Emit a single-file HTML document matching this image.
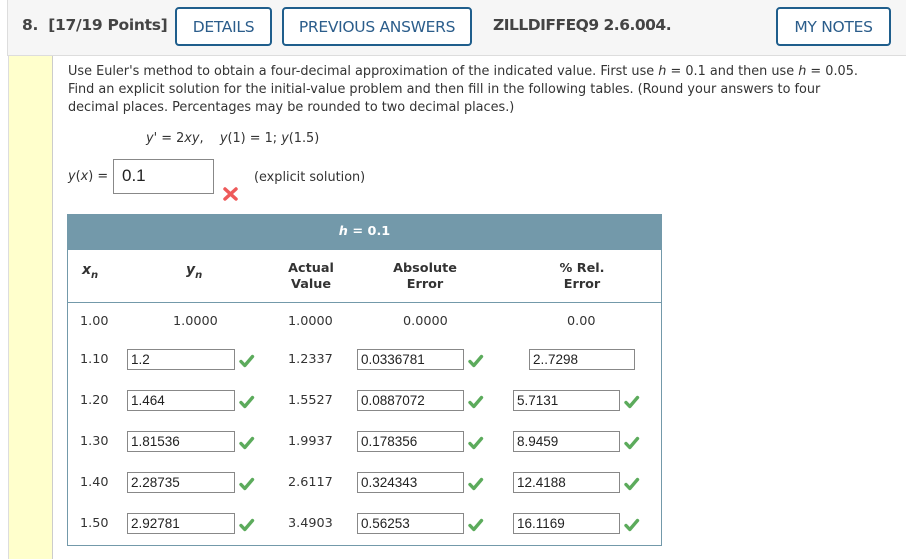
<!DOCTYPE html>
<html><head><style>
*{margin:0;padding:0;box-sizing:border-box}
body{width:906px;height:559px;background:#fff;position:relative;overflow:hidden;font-family:"DejaVu Sans",Verdana,sans-serif;color:#333}
.a{position:absolute;white-space:nowrap}
.hdr{position:absolute;left:7px;top:0;width:899px;height:56px;background:#f6f6f6;border-bottom:1px solid #ddd;border-left:1px solid #ddd}
.btn{position:absolute;top:7px;height:39px;border:2px solid #1f5e8c;border-radius:4px;background:#fff;color:#2b5d8b;font-family:"DejaVu Sans",sans-serif;font-size:15.5px;display:flex;align-items:center;justify-content:center;letter-spacing:-0.3px}
.yl{position:absolute;left:8px;top:56px;width:45px;height:503px;background:#ffffcc;border-right:1px solid #ccc;border-left:1px solid #ddd}
.p{font-size:12.85px;line-height:18px;color:#333}
.in{position:absolute;height:21px;border:1px solid #888;background:#fff;font-family:"Liberation Sans",Arial,sans-serif;font-size:13.5px;padding-left:3px;line-height:19px;color:#222}
.ck{position:absolute;width:17px;height:15px}
.t{font-size:12.8px;color:#333}
.th{font-size:12.8px;font-weight:bold;color:#333;text-align:center;line-height:16px}
</style></head><body>
<div class="hdr"></div>
<div class="a" style="left:22px;top:16px;font-size:15.5px;font-weight:bold;color:#444;letter-spacing:-0.3px">8.&nbsp; [17/19 Points]</div>
<div class="btn" style="left:175px;width:97px">DETAILS</div>
<div class="btn" style="left:282px;width:190px">PREVIOUS ANSWERS</div>
<div class="a" style="left:493px;top:16px;font-size:15.5px;font-weight:bold;color:#444;letter-spacing:-0.5px">ZILLDIFFEQ9 2.6.004.</div>
<div class="btn" style="left:776px;width:115px">MY NOTES</div>
<div class="yl"></div>
<div class="a p" style="left:68px;top:63px">Use Euler's method to obtain a four-decimal approximation of the indicated value. First use <i>h</i> = 0.1 and then use <i>h</i> = 0.05.<br>Find an explicit solution for the initial-value problem and then fill in the following tables. (Round your answers to four<br>decimal places. Percentages may be rounded to two decimal places.)</div>
<div class="a p" style="left:146px;top:130px"><i>y</i>' = 2<i>xy</i>,&nbsp;&nbsp;&nbsp; <i>y</i>(1) = 1; <i>y</i>(1.5)</div>
<div class="a p" style="left:68px;top:168px"><i>y</i>(<i>x</i>) =</div>
<div class="in" style="left:113px;top:159px;width:101px;height:35px;font-size:17px;line-height:31px;padding-left:8px">0.1</div>
<svg class="a" style="left:223px;top:187px" width="15" height="14" viewBox="0 0 15 14"><path d="M2 2L13 12M13 2L2 12" stroke="#ee5a5a" stroke-width="3.5" stroke-linecap="round"/></svg>
<div class="a p" style="left:254px;top:169px">(explicit solution)</div>
<div class="a" style="left:67px;top:214px;width:595px;height:332px;border:1px solid #7399aa;border-top:none"></div>
<div class="a" style="left:67px;top:214px;width:595px;height:36px;background:#7399aa;color:#fff;font-weight:bold;font-size:12.8px;text-align:center;line-height:36px"><i>h</i> = 0.1</div>
<div class="a" style="left:67px;top:302px;width:595px;height:1px;background:#7399aa"></div>
<div class="a th" style="left:82px;top:262px;font-size:14px"><i>x<sub style="font-size:10px">n</sub></i></div>
<div class="a th" style="left:186px;top:262px;font-size:14px"><i>y<sub style="font-size:10px">n</sub></i></div>
<div class="a th" style="left:280px;top:261px;width:62px">Actual<br>Value</div>
<div class="a th" style="left:385px;top:261px;width:80px">Absolute<br>Error</div>
<div class="a th" style="left:550px;top:261px;width:64px">% Rel.<br>Error</div>
<div class="a t" style="left:80px;top:314px">1.00</div>
<div class="a t" style="left:173px;top:314px">1.0000</div>
<div class="a t" style="left:288px;top:314px">1.0000</div>
<div class="a t" style="left:403px;top:314px">0.0000</div>
<div class="a t" style="left:567px;top:314px">0.00</div>
<svg width="0" height="0" style="position:absolute"><defs><symbol id="c" viewBox="0 0 17 15"><path d="M3 8.5L6.8 12.5L14.5 3.5" fill="none" stroke="#5cab5c" stroke-width="3.4" stroke-linecap="round" stroke-linejoin="round"/></symbol></defs></svg>
<div class="a t" style="left:80px;top:352px">1.10</div>
<div class="in" style="left:127px;top:349px;width:108px">1.2</div>
<svg class="ck" style="left:238px;top:353px"><use href="#c"/></svg>
<div class="a t" style="left:288px;top:352px">1.2337</div>
<div class="in" style="left:357px;top:349px;width:107px">0.0336781</div>
<svg class="ck" style="left:467px;top:353px"><use href="#c"/></svg>
<div class="in" style="left:529px;top:349px;width:106px">2..7298</div>

<div class="a t" style="left:80px;top:393px">1.20</div>
<div class="in" style="left:127px;top:390px;width:108px">1.464</div>
<svg class="ck" style="left:238px;top:394px"><use href="#c"/></svg>
<div class="a t" style="left:288px;top:393px">1.5527</div>
<div class="in" style="left:357px;top:390px;width:107px">0.0887072</div>
<svg class="ck" style="left:467px;top:394px"><use href="#c"/></svg>
<div class="in" style="left:513px;top:390px;width:107px">5.7131</div>
<svg class="ck" style="left:623px;top:394px"><use href="#c"/></svg>

<div class="a t" style="left:80px;top:434px">1.30</div>
<div class="in" style="left:127px;top:431px;width:108px">1.81536</div>
<svg class="ck" style="left:238px;top:435px"><use href="#c"/></svg>
<div class="a t" style="left:288px;top:434px">1.9937</div>
<div class="in" style="left:357px;top:431px;width:107px">0.178356</div>
<svg class="ck" style="left:467px;top:435px"><use href="#c"/></svg>
<div class="in" style="left:513px;top:431px;width:107px">8.9459</div>
<svg class="ck" style="left:623px;top:435px"><use href="#c"/></svg>

<div class="a t" style="left:80px;top:475px">1.40</div>
<div class="in" style="left:127px;top:472px;width:108px">2.28735</div>
<svg class="ck" style="left:238px;top:476px"><use href="#c"/></svg>
<div class="a t" style="left:288px;top:475px">2.6117</div>
<div class="in" style="left:357px;top:472px;width:107px">0.324343</div>
<svg class="ck" style="left:467px;top:476px"><use href="#c"/></svg>
<div class="in" style="left:513px;top:472px;width:107px">12.4188</div>
<svg class="ck" style="left:623px;top:476px"><use href="#c"/></svg>

<div class="a t" style="left:80px;top:516px">1.50</div>
<div class="in" style="left:127px;top:513px;width:108px">2.92781</div>
<svg class="ck" style="left:238px;top:517px"><use href="#c"/></svg>
<div class="a t" style="left:288px;top:516px">3.4903</div>
<div class="in" style="left:357px;top:513px;width:107px">0.56253</div>
<svg class="ck" style="left:467px;top:517px"><use href="#c"/></svg>
<div class="in" style="left:513px;top:513px;width:107px">16.1169</div>
<svg class="ck" style="left:623px;top:517px"><use href="#c"/></svg>
</body></html>
